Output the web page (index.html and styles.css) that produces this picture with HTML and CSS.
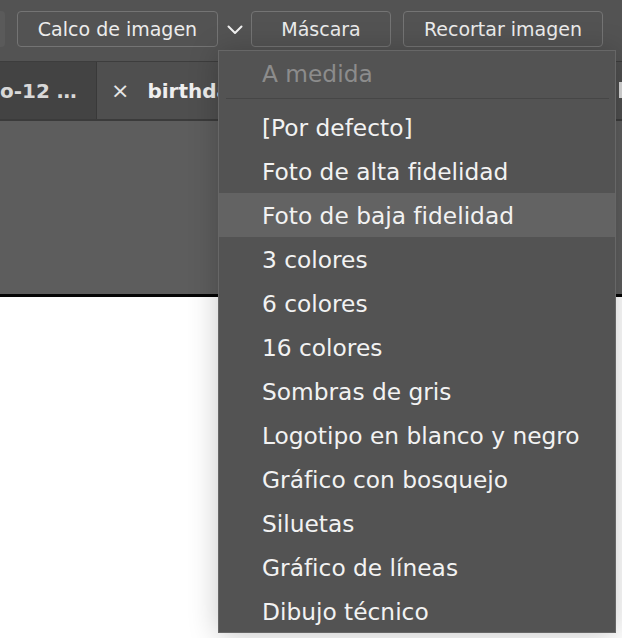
FILE: index.html
```html
<!DOCTYPE html>
<html lang="es">
<head>
<meta charset="utf-8">
<title>Calco de imagen</title>
<link rel="stylesheet" href="styles.css">
</head>
<body>
<div class="app">
  <div class="toolbar">
    <div class="stub"></div>
    <button class="btn btn-calco">Calco de imagen</button>
    <span class="chev"><svg width="16" height="10" viewBox="0 0 16 10"><path d="M1.5 1.5 L8 8 L14.5 1.5" fill="none" stroke="#f2f2f2" stroke-width="2" stroke-linecap="round" stroke-linejoin="round"/></svg></span>
    <button class="btn btn-mascara">Máscara</button>
    <button class="btn btn-recortar">Recortar imagen</button>
  </div>
  <div class="tabs">
    <div class="tab tab-prev">o-12 …</div>
    <div class="tab tab-active"><span class="tab-x">×</span><span class="tab-name">birthda</span></div>
    <div class="tab-edge"><span class="edge-mark"></span></div>
  </div>
  <div class="canvas">
    <div class="pasteboard"></div>
    <div class="artboard"></div>
  </div>
  <div class="menu">
    <div class="item disabled">A medida</div>
    <div class="sep"></div>
    <div class="item">[Por defecto]</div>
    <div class="item">Foto de alta fidelidad</div>
    <div class="item hover">Foto de baja fidelidad</div>
    <div class="item">3 colores</div>
    <div class="item">6 colores</div>
    <div class="item">16 colores</div>
    <div class="item">Sombras de gris</div>
    <div class="item">Logotipo en blanco y negro</div>
    <div class="item">Gráfico con bosquejo</div>
    <div class="item">Siluetas</div>
    <div class="item">Gráfico de líneas</div>
    <div class="item">Dibujo técnico</div>
  </div>
</div>
</body>
</html>
```
FILE: styles.css
```css
* { box-sizing: border-box; }
html, body { margin: 0; padding: 0; }
body {
  width: 622px;
  height: 638px;
  overflow: hidden;
  background: #535353;
  font-family: "DejaVu Sans", "Liberation Sans", sans-serif;
  color: #efefef;
}
.app {
  position: relative;
  width: 622px;
  height: 638px;
  display: flex;
  flex-direction: column;
}
.toolbar {
  height: 62px;
  flex: none;
  display: flex;
  align-items: flex-start;
  padding-top: 11px;
  background: #535353;
  border-bottom: 1px solid #3d3d3d;
}
.stub {
  width: 5px;
  height: 36px;
  background: #5a5a5a;
  border-radius: 0 4px 4px 0;
  margin-right: 12px;
}
.btn {
  height: 36px;
  background: #535353;
  border: 1px solid #747474;
  border-radius: 4px;
  color: #ececec;
  font-family: inherit;
  font-size: 19px;
  padding: 0;
  display: flex;
  align-items: center;
  justify-content: center;
}
.btn-calco { width: 201px; }
.chev {
  width: 33px;
  height: 36px;
  display: flex;
  align-items: center;
  justify-content: center;
  padding-top: 2px;
}
.btn-mascara { width: 140px; margin-right: 12px; }
.btn-recortar { width: 200px; }
.tabs {
  height: 59px;
  flex: none;
  display: flex;
  background: #4a4a4a;
  border-bottom: 2px solid #3b3b3b;
}
.tab {
  height: 100%;
  display: flex;
  align-items: center;
  font-size: 20px;
  white-space: nowrap;
  overflow: hidden;
}
.tab-prev {
  width: 97px;
  background: #434343;
  color: #d8d8d8;
  border-right: 1px solid #393939;
  padding-left: 0;
  font-weight: 600;
}
.tab-active {
  flex: 1;
  background: #4f4f4f;
  padding-left: 14px;
  color: #efefef;
}
.tab-x { font-size: 22px; margin-right: 18px; color: #e6e6e6; }
.tab-name { font-weight: bold; }
.tab-edge {
  width: 6px;
  background: #4f4f4f;
  display: flex;
  align-items: center;
  justify-content: flex-end;
}
.edge-mark {
  width: 3px;
  height: 16px;
  background: #d8d8d8;
  margin-bottom: 2px;
}
.canvas {
  flex: 1;
  display: flex;
  flex-direction: column;
}
.pasteboard {
  height: 176px;
  flex: none;
  background: #5d5d5d;
  border-bottom: 3px solid #050505;
}
.artboard {
  flex: 1;
  background: #ffffff;
}
.menu {
  position: absolute;
  left: 218px;
  top: 50px;
  width: 398px;
  height: 583px;
  background: #535353;
  border: 1px solid #676767;
  box-shadow: 0 2px 28px rgba(0, 0, 0, 0.22);
}
.item {
  height: 44px;
  display: flex;
  align-items: center;
  padding-left: 43px;
  font-size: 23.3px;
  color: #f2f2f2;
  white-space: nowrap;
}
.item.disabled { color: #8c8c8c; }
.item.hover { background: #636363; }
.sep {
  height: 1px;
  margin: 3px 6px 6px 7px;
  background: #464646;
}
```
